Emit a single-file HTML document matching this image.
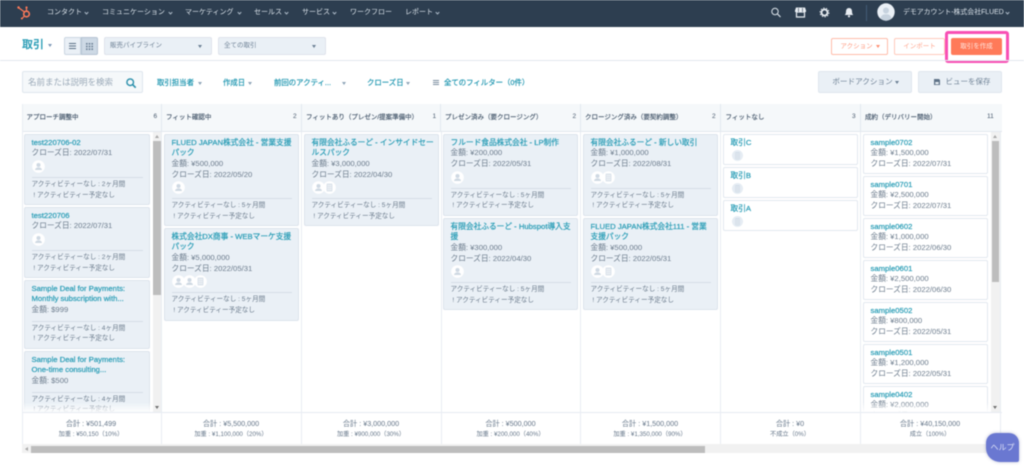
<!DOCTYPE html>
<html lang="ja"><head><meta charset="utf-8"><title>取引</title>
<style>
*{box-sizing:border-box}
html,body{margin:0;padding:0;width:1024px;height:467px;overflow:hidden;background:#fff}
body{font-family:"Liberation Sans","Noto Sans CJK JP",sans-serif;color:#33475b;position:relative}
#w{position:absolute;left:0;top:0;width:1024px;height:467px;overflow:hidden;filter:blur(.4px)}
.a{position:absolute;white-space:nowrap}
.nav{top:0;font-size:7px;line-height:26px;color:#dbe3ea}
.chev{position:absolute;width:3px;height:3px;border-right:.8px solid #aab8c6;border-bottom:.8px solid #aab8c6;transform:rotate(45deg);top:11px}
.car{position:absolute;width:0;height:0;border-left:2.6px solid transparent;border-right:2.6px solid transparent;border-top:3px solid #6b7f94}
.tcar{border-top-color:#3a9fb8}
.sel{top:37px;height:18px;background:#eaf0f6;border:1px solid #dfe3eb;border-radius:2px;font-size:6.5px;line-height:16px;color:#6f8296;padding-left:5px}
.btn{border-radius:2px;font-size:6.5px;text-align:center}
.f{top:76px;font-size:7.4px;line-height:14px;color:#1f96b0;font-weight:normal;-webkit-text-stroke:.2px #1f96b0}
.h{top:104px;height:28px;background:#f5f8fa;border-right:1px solid #e3e8ef;border-bottom:1px solid #e3e8ef}
.ht{top:112px;font-size:6.5px;line-height:12px;font-weight:normal;color:#44566a;-webkit-text-stroke:.15px #44566a}
.ct{top:111px;font-size:6.5px;line-height:12px;color:#44566a}
.vl{top:132px;width:1px;height:312px;background:#e9edf3}
.c{position:absolute;background:#eaf0f6;border:1px solid #dde4ec;border-radius:2px;padding:2.7px 6.5px 0;overflow:hidden}
.c.w{background:#fff;border-color:#e3e8ef}
.c div{white-space:nowrap}
.t{font-size:7.7px;line-height:10.67px;font-weight:normal;color:#2a9db6;-webkit-text-stroke:.22px #2a9db6}
.l{font-size:7.7px;line-height:10.67px;color:#6b7b8c}
.av{height:13px;margin-top:1px;display:flex}
.av svg{width:13px;height:13px;margin-right:-2px;flex:none}
.sp{height:1px;background:#d6dee7;margin-top:4px;margin-bottom:1.8px}
.s{font-size:6.6px;line-height:10.67px;color:#6b7b8c}
.ft{top:412px;height:32px;background:#fff;border-top:1px solid #e6ebf2}
.fa{font-size:7.2px;line-height:11px;color:#66778a;text-align:center;width:140px;top:418px}
.fb{font-size:6.2px;line-height:11px;color:#66778a;text-align:center;width:140px;top:429px}
.tr{background:#f1f1f1}
.th{background:#bdbdbd}
</style></head><body>
<svg width="0" height="0" style="position:absolute"><defs>
<symbol id="p" viewBox="0 0 13 13"><circle cx="6.5" cy="6.5" r="6.3" fill="#fff"/><circle cx="6.5" cy="5" r="2" fill="#cfd9e3"/><path d="M3 10c.4-2 2-2.6 3.5-2.6S9.6 8 10 10z" fill="#cfd9e3"/></symbol>
<symbol id="b" viewBox="0 0 13 13"><circle cx="6.5" cy="6.5" r="6.3" fill="#fff"/><rect x="3.5" y="2.5" width="6" height="8" rx="1" fill="#dde4ec"/><path d="M4.5 4.5h4M4.5 6.5h4M4.5 8.5h4" stroke="#f2f5f8" stroke-width=".7"/></symbol>
<symbol id="d" viewBox="0 0 13 13"><circle cx="6.5" cy="6.5" r="5.5" fill="#e6edf4"/><rect x="4" y="3" width="5" height="7.5" rx="1" fill="#d5dfe9"/><path d="M4.5 5h4M4.5 7h4M4.5 9h4" stroke="#eef2f6" stroke-width=".6"/></symbol>
</defs></svg>
<div id="w">
<!-- top nav -->
<div class="a" style="left:0;top:0;width:1024px;height:27px;background:#2d3e50"></div>
<svg class="a" style="left:15px;top:4px" width="18" height="18" viewBox="15 4 18 18"><g stroke="#ff7a59" fill="none"><circle cx="26.5" cy="14" r="2.8" stroke-width="1.6"/><path d="M26.5 11V8M24.5 12L19 8M24.5 16L22 18.5" stroke-width="1.2"/></g><circle cx="26.5" cy="7.5" r="1.1" fill="#ff7a59"/><circle cx="18.5" cy="7.5" r="1.2" fill="#ff7a59"/><circle cx="21.8" cy="18.5" r="1" fill="#ff7a59"/></svg>
<div class="a nav" style="left:47px">コンタクト</div><i class="chev" style="left:85px"></i>
<div class="a nav" style="left:102px">コミュニケーション</div><i class="chev" style="left:168.5px"></i>
<div class="a nav" style="left:185px">マーケティング</div><i class="chev" style="left:237.5px"></i>
<div class="a nav" style="left:254px">セールス</div><i class="chev" style="left:285px"></i>
<div class="a nav" style="left:302px">サービス</div><i class="chev" style="left:333px"></i>
<div class="a nav" style="left:350px">ワークフロー</div>
<div class="a nav" style="left:405px">レポート</div><i class="chev" style="left:435.5px"></i>
<svg class="a" style="left:770px;top:5px" width="90" height="18" viewBox="770 5 90 18">
<circle cx="775" cy="11.5" r="3.2" fill="none" stroke="#dbe3ea" stroke-width="1"/><path d="M777.5 14l3 3" stroke="#dbe3ea" stroke-width="1.2"/>
<path d="M796 7.5h9l1 3v1.500h-11v-1.500z" fill="#e8edf2"/><path d="M796.5 12h8v5h-8z" fill="none" stroke="#e8edf2" stroke-width="1.2"/><path d="M798.500 8v4M802.500 8v4" stroke="#2d3e50" stroke-width=".6"/>
<circle cx="824.5" cy="12.5" r="3" fill="none" stroke="#e8edf2" stroke-width="1.8"/><circle cx="824.5" cy="12.5" r="4.4" fill="none" stroke="#e8edf2" stroke-width="1" stroke-dasharray="1.4 1.36"/>
<path d="M849 8c2 0 3 1.500 3 3.500 0 2 .6 2.800 1.300 3.500h-8.600c.7-.7 1.300-1.500 1.300-3.500S847 8 849 8z" fill="#e8edf2"/><circle cx="849" cy="16.3" r="1.1" fill="#e8edf2"/>
</svg>
<div class="a" style="left:866px;top:5px;width:1px;height:16px;background:#425b76"></div>
<svg class="a" style="left:877px;top:3px" width="18" height="18" viewBox="0 0 18 18"><circle cx="9" cy="9" r="8.7" fill="#eaf0f6"/><circle cx="9" cy="7.5" r="3" fill="#c6d2de"/><path d="M3.500 15c.8-3 3-3.800 5.500-3.800s4.700.8 5.500 3.800A8.700 8.700 0 0 1 9 17.700 8.700 8.700 0 0 1 3.500 15z" fill="#c6d2de"/></svg>
<div class="a nav" style="left:903px;font-size:6.9px">デモアカウント-株式会社FLUED</div><i class="chev" style="left:1006px"></i>

<!-- row 2 -->
<div class="a" style="left:22px;top:38px;font-size:11px;line-height:15px;font-weight:bold;color:#2a9db6">取引</div>
<i class="car" style="left:47.5px;top:44px;border-top-color:#7c98b6"></i>
<div class="a" style="left:64px;top:37px;width:17px;height:18px;background:#eaf0f6;border:1px solid #cbd6e2;border-radius:2px 0 0 2px"></div>
<div class="a" style="left:69px;top:43px;width:7px;height:1.3px;background:#5a6f85;box-shadow:0 2.5px 0 #5a6f85,0 5px 0 #5a6f85"></div>
<div class="a" style="left:81px;top:37px;width:17px;height:18px;background:#cdd9e5;border:1px solid #b5c4d3;border-radius:0 2px 2px 0"></div>
<svg class="a" style="left:86px;top:42.5px" width="7" height="7" viewBox="0 0 7 7" fill="#6d8196"><rect width="1.600" height="1.600"/><rect x="2.700" width="1.600" height="1.600"/><rect x="5.400" width="1.600" height="1.600"/><rect y="2.700" width="1.600" height="1.600"/><rect x="2.700" y="2.700" width="1.600" height="1.600"/><rect x="5.400" y="2.700" width="1.600" height="1.600"/><rect y="5.400" width="1.600" height="1.600"/><rect x="2.700" y="5.400" width="1.600" height="1.600"/><rect x="5.400" y="5.400" width="1.600" height="1.600"/></svg>
<div class="a sel" style="left:104px;width:108px">販売パイプライン</div><i class="car" style="left:198px;top:45px"></i>
<div class="a sel" style="left:218px;width:108px">全ての取引</div><i class="car" style="left:312px;top:45px"></i>
<div class="a btn" style="left:831px;top:38px;width:57px;height:17px;border:1px solid #ffbcaa;background:#fff;color:#ff9a80;line-height:15px;padding-right:6px">アクション</div><i class="car" style="left:875.5px;top:45px;border-top-color:#ff8f73"></i>
<div class="a btn" style="left:894px;top:38px;width:51px;height:17px;border:1px solid #ffcabc;background:#fff;color:#ffa68f;line-height:15px">インポート</div>
<div class="a" style="left:945px;top:31px;width:64px;height:32px;border:3.5px solid #f84fb4;border-radius:3px"></div>
<div class="a btn" style="left:951px;top:38px;width:51px;height:17px;background:#ff7a59;color:#ffe6df;line-height:17px">取引を作成</div>
<div class="a" style="left:0;top:60px;width:1024px;height:1px;background:#e3e8ef"></div>

<!-- row 3 -->
<div class="a" style="left:22px;top:71px;width:121px;height:22px;background:#f5f8fa;border:1px solid #dfe6ee;border-radius:2px;font-size:8.5px;line-height:20px;color:#9aa9b8;padding-left:5px">名前または説明を検索</div>
<svg class="a" style="left:125px;top:77px" width="12" height="12" viewBox="0 0 12 12"><circle cx="5.2" cy="5.2" r="3.3" fill="none" stroke="#2a8fab" stroke-width="1.4"/><path d="M7.7 7.7l3 3" stroke="#2a8fab" stroke-width="1.6"/></svg>
<div class="a f" style="left:157px">取引担当者</div><i class="car tcar" style="left:198px;top:81.5px;border-top-color:#8fa5b8"></i>
<div class="a f" style="left:223px">作成日</div><i class="car tcar" style="left:248px;top:81.5px;border-top-color:#8fa5b8"></i>
<div class="a f" style="left:274px">前回のアクティ...</div><i class="car tcar" style="left:341.5px;top:81.5px;border-top-color:#8fa5b8"></i>
<div class="a f" style="left:367px">クローズ日</div><i class="car tcar" style="left:406px;top:81.5px;border-top-color:#8fa5b8"></i>
<div class="a" style="left:433px;top:80px;width:6px;height:1px;background:#7c8ea0;box-shadow:0 2px 0 #7c8ea0,0 4px 0 #7c8ea0"></div>
<div class="a f" style="left:444px">全てのフィルター（0件）</div>
<div class="a btn" style="left:818px;top:71px;width:94px;height:22px;background:#eaf0f6;border:1px solid #dfe6ee;color:#6f8296;font-size:7.6px;line-height:20px;padding-right:5px">ボードアクション</div><i class="car" style="left:895px;top:81px"></i>
<div class="a btn" style="left:918px;top:71px;width:84px;height:22px;background:#eaf0f6;border:1px solid #dfe6ee;color:#6f8296;font-size:7.5px;line-height:20px;padding-left:16px">ビューを保存</div>
<svg class="a" style="left:933px;top:78px" width="8" height="8" viewBox="0 0 8 8"><path d="M1 1h5l1 1v5H1z" fill="#5f7388"/><rect x="2.3" y="4" width="3.4" height="2.2" fill="#eaf0f6"/></svg>

<!-- board headers -->
<div class="a h" style="left:22px;width:140px"></div>
<div class="a h" style="left:162px;width:140px"></div>
<div class="a h" style="left:302px;width:139px"></div>
<div class="a h" style="left:441px;width:140px"></div>
<div class="a h" style="left:581px;width:140px"></div>
<div class="a h" style="left:721px;width:140px"></div>
<div class="a h" style="left:861px;width:141px;border-right:0"></div>
<div class="a ht" style="left:26.5px">アプローチ調整中</div><div class="a ct" style="left:153.5px">6</div>
<div class="a ht" style="left:166px">フィット確認中</div><div class="a ct" style="left:293px">2</div>
<div class="a ht" style="left:306px">フィットあり（プレゼン/提案準備中）</div><div class="a ct" style="left:432.5px">1</div>
<div class="a ht" style="left:445px">プレゼン済み（要クロージング）</div><div class="a ct" style="left:572.5px">2</div>
<div class="a ht" style="left:585px">クロージング済み（要契約調整）</div><div class="a ct" style="left:712px">2</div>
<div class="a ht" style="left:725.5px">フィットなし</div><div class="a ct" style="left:852px">3</div>
<div class="a ht" style="left:865px">成約（デリバリー開始）</div><div class="a ct" style="left:987px">11</div>

<div class="a" style="left:22px;top:104px;width:1px;height:340px;background:#e9edf3"></div>
<div class="a vl" style="left:161px"></div><div class="a vl" style="left:301px"></div><div class="a vl" style="left:441px"></div><div class="a vl" style="left:580px"></div><div class="a vl" style="left:720px"></div><div class="a vl" style="left:860px"></div><div class="a vl" style="left:1000px"></div>

<!-- col 1 -->
<div class="c" style="left:24px;top:134px;width:126px;height:71px"><div class="t">test220706-02</div><div class="l">クローズ日: 2022/07/31</div><div class="av"><svg><use href="#p"/></svg></div><div class="sp"></div><div class="s">アクティビティーなし : 2ヶ月間</div><div class="s">&nbsp;!&nbsp;アクティビティー予定なし</div></div>
<div class="c" style="left:24px;top:207px;width:126px;height:71px"><div class="t">test220706</div><div class="l">クローズ日: 2022/07/31</div><div class="av"><svg><use href="#p"/></svg></div><div class="sp"></div><div class="s">アクティビティーなし : 2ヶ月間</div><div class="s">&nbsp;!&nbsp;アクティビティー予定なし</div></div>
<div class="c" style="left:24px;top:280px;width:126px;height:69px"><div class="t">Sample Deal for Payments:</div><div class="t">Monthly subscription with...</div><div class="l">金額: $999</div><div class="sp" style="margin-top:5px"></div><div class="s">アクティビティーなし : 4ヶ月間</div><div class="s">&nbsp;!&nbsp;アクティビティー予定なし</div></div>
<div class="c" style="left:24px;top:351px;width:126px;height:69px"><div class="t">Sample Deal for Payments:</div><div class="t">One-time consulting...</div><div class="l">金額: $500</div><div class="sp" style="margin-top:5px"></div><div class="s">アクティビティーなし : 4ヶ月間</div><div class="s">&nbsp;!&nbsp;アクティビティー予定なし</div></div>
<div class="a tr" style="left:153px;top:132px;width:8px;height:280px"></div>
<div class="a th" style="left:153px;top:141px;width:8px;height:154px"></div>
<div class="a" style="left:155px;top:135px;border-left:2.5px solid transparent;border-right:2.5px solid transparent;border-bottom:3px solid #a8a8a8"></div>
<div class="a" style="left:155px;top:406px;border-left:2.5px solid transparent;border-right:2.5px solid transparent;border-top:3px solid #707070"></div>

<!-- col 2 -->
<div class="c" style="left:164px;top:134px;width:135px;height:92px"><div class="t">FLUED JAPAN株式会社 - 営業支援</div><div class="t">パック</div><div class="l">金額: ¥500,000</div><div class="l">クローズ日: 2022/05/20</div><div class="av"><svg><use href="#p"/></svg></div><div class="sp"></div><div class="s">アクティビティーなし : 5ヶ月間</div><div class="s">&nbsp;!&nbsp;アクティビティー予定なし</div></div>
<div class="c" style="left:164px;top:228px;width:135px;height:93px"><div class="t">株式会社DX商事 - WEBマーケ支援</div><div class="t">パック</div><div class="l">金額: ¥5,000,000</div><div class="l">クローズ日: 2022/05/31</div><div class="av"><svg><use href="#p"/></svg><svg><use href="#p"/></svg><svg><use href="#b"/></svg></div><div class="sp"></div><div class="s">アクティビティーなし : 5ヶ月間</div><div class="s">&nbsp;!&nbsp;アクティビティー予定なし</div></div>

<!-- col 3 -->
<div class="c" style="left:304px;top:134px;width:135px;height:92px"><div class="t">有限会社ふるーど - インサイドセー</div><div class="t">ルスパック</div><div class="l">金額: ¥3,000,000</div><div class="l">クローズ日: 2022/04/30</div><div class="av"><svg><use href="#p"/></svg><svg><use href="#b"/></svg></div><div class="sp"></div><div class="s">アクティビティーなし : 5ヶ月間</div><div class="s">&nbsp;!&nbsp;アクティビティー予定なし</div></div>

<!-- col 4 -->
<div class="c" style="left:443px;top:134px;width:135px;height:82px"><div class="t">フルード食品株式会社 - LP制作</div><div class="l">金額: ¥200,000</div><div class="l">クローズ日: 2022/05/31</div><div class="av"><svg><use href="#p"/></svg></div><div class="sp"></div><div class="s">アクティビティーなし : 5ヶ月間</div><div class="s">&nbsp;!&nbsp;アクティビティー予定なし</div></div>
<div class="c" style="left:443px;top:218px;width:135px;height:92px"><div class="t">有限会社ふるーど - Hubspot導入支</div><div class="t">援</div><div class="l">金額: ¥300,000</div><div class="l">クローズ日: 2022/04/30</div><div class="av"><svg><use href="#p"/></svg></div><div class="sp"></div><div class="s">アクティビティーなし : 5ヶ月間</div><div class="s">&nbsp;!&nbsp;アクティビティー予定なし</div></div>

<!-- col 5 -->
<div class="c" style="left:583px;top:134px;width:135px;height:82px"><div class="t">有限会社ふるーど - 新しい取引</div><div class="l">金額: ¥1,000,000</div><div class="l">クローズ日: 2022/08/31</div><div class="av"><svg><use href="#p"/></svg><svg><use href="#b"/></svg></div><div class="sp"></div><div class="s">アクティビティーなし : 5ヶ月間</div><div class="s">&nbsp;!&nbsp;アクティビティー予定なし</div></div>
<div class="c" style="left:583px;top:218px;width:135px;height:92px"><div class="t">FLUED JAPAN株式会社111 - 営業</div><div class="t">支援パック</div><div class="l">金額: ¥500,000</div><div class="l">クローズ日: 2022/05/31</div><div class="av"><svg><use href="#p"/></svg><svg><use href="#b"/></svg></div><div class="sp"></div><div class="s">アクティビティーなし : 5ヶ月間</div><div class="s">&nbsp;!&nbsp;アクティビティー予定なし</div></div>

<!-- col 6 -->
<div class="c w" style="left:723px;top:134px;width:135px;height:31px"><div class="t">取引C</div><div class="av"><svg><use href="#d"/></svg></div></div>
<div class="c w" style="left:723px;top:167px;width:135px;height:31px"><div class="t">取引B</div><div class="av"><svg><use href="#d"/></svg></div></div>
<div class="c w" style="left:723px;top:200px;width:135px;height:31px"><div class="t">取引A</div><div class="av"><svg><use href="#d"/></svg></div></div>

<!-- col 7 -->
<div class="c w" style="left:863px;top:134px;width:125px;height:40px"><div class="t">sample0702</div><div class="l">金額: ¥1,500,000</div><div class="l">クローズ日: 2022/07/31</div></div>
<div class="c w" style="left:863px;top:176px;width:125px;height:40px"><div class="t">sample0701</div><div class="l">金額: ¥2,500,000</div><div class="l">クローズ日: 2022/07/31</div></div>
<div class="c w" style="left:863px;top:218px;width:125px;height:40px"><div class="t">sample0602</div><div class="l">金額: ¥1,000,000</div><div class="l">クローズ日: 2022/06/30</div></div>
<div class="c w" style="left:863px;top:260px;width:125px;height:40px"><div class="t">sample0601</div><div class="l">金額: ¥2,500,000</div><div class="l">クローズ日: 2022/06/30</div></div>
<div class="c w" style="left:863px;top:302px;width:125px;height:40px"><div class="t">sample0502</div><div class="l">金額: ¥800,000</div><div class="l">クローズ日: 2022/05/31</div></div>
<div class="c w" style="left:863px;top:344px;width:125px;height:40px"><div class="t">sample0501</div><div class="l">金額: ¥1,200,000</div><div class="l">クローズ日: 2022/05/31</div></div>
<div class="c w" style="left:863px;top:386px;width:125px;height:40px"><div class="t">sample0402</div><div class="l">金額: ¥2,000,000</div><div class="l">クローズ日: 2022/04/30</div></div>
<div class="a tr" style="left:991px;top:132px;width:9px;height:280px"></div>
<div class="a th" style="left:992px;top:141px;width:7px;height:141px"></div>
<div class="a" style="left:993px;top:135px;border-left:2.5px solid transparent;border-right:2.5px solid transparent;border-bottom:3px solid #a8a8a8"></div>
<div class="a" style="left:993px;top:406px;border-left:2.5px solid transparent;border-right:2.5px solid transparent;border-top:3px solid #707070"></div>

<!-- fades -->
<div class="a" style="left:23px;top:402px;width:130px;height:10px;background:linear-gradient(rgba(255,255,255,0),rgba(255,255,255,.9))"></div>
<div class="a" style="left:861px;top:402px;width:130px;height:10px;background:linear-gradient(rgba(255,255,255,0),rgba(255,255,255,.9))"></div>

<!-- footers -->
<div class="a ft" style="left:22px;width:980px"></div>
<div class="a vl" style="left:22px;top:412px;height:32px"></div><div class="a vl" style="left:161px;top:412px;height:32px"></div><div class="a vl" style="left:301px;top:412px;height:32px"></div><div class="a vl" style="left:441px;top:412px;height:32px"></div><div class="a vl" style="left:580px;top:412px;height:32px"></div><div class="a vl" style="left:720px;top:412px;height:32px"></div><div class="a vl" style="left:860px;top:412px;height:32px"></div><div class="a vl" style="left:1000px;top:412px;height:32px"></div>
<div class="a fa" style="left:21px">合計 : ¥501,499</div><div class="a fb" style="left:21px">加重 : ¥50,150（10%）</div>
<div class="a fa" style="left:161px">合計 : ¥5,500,000</div><div class="a fb" style="left:161px">加重 : ¥1,100,000（20%）</div>
<div class="a fa" style="left:301px">合計 : ¥3,000,000</div><div class="a fb" style="left:301px">加重 : ¥900,000（30%）</div>
<div class="a fa" style="left:440.5px">合計 : ¥500,000</div><div class="a fb" style="left:440.5px">加重 : ¥200,000（40%）</div>
<div class="a fa" style="left:580px">合計 : ¥1,500,000</div><div class="a fb" style="left:580px">加重 : ¥1,350,000（90%）</div>
<div class="a fa" style="left:720px">合計 : ¥0</div><div class="a fb" style="left:720px">不成立（0%）</div>
<div class="a fa" style="left:860px">合計 : ¥40,150,000</div><div class="a fb" style="left:860px">成立（100%）</div>

<!-- h scrollbar -->
<div class="a tr" style="left:22px;top:444px;width:980px;height:9px"></div>
<div class="a th" style="left:31px;top:446px;width:674px;height:7px"></div>
<div class="a" style="left:25px;top:447px;border-top:2.5px solid transparent;border-bottom:2.5px solid transparent;border-right:3px solid #a8a8a8"></div>

<!-- help -->
<div class="a" style="left:986px;top:433px;width:33px;height:29px;background:#6a78d1;border-radius:10px 10px 2px 14px;box-shadow:0 0 3px rgba(80,90,150,.4);color:#dfe3f7;font-size:8px;line-height:29px;text-align:center">ヘルプ</div>
</div>
</body></html>
